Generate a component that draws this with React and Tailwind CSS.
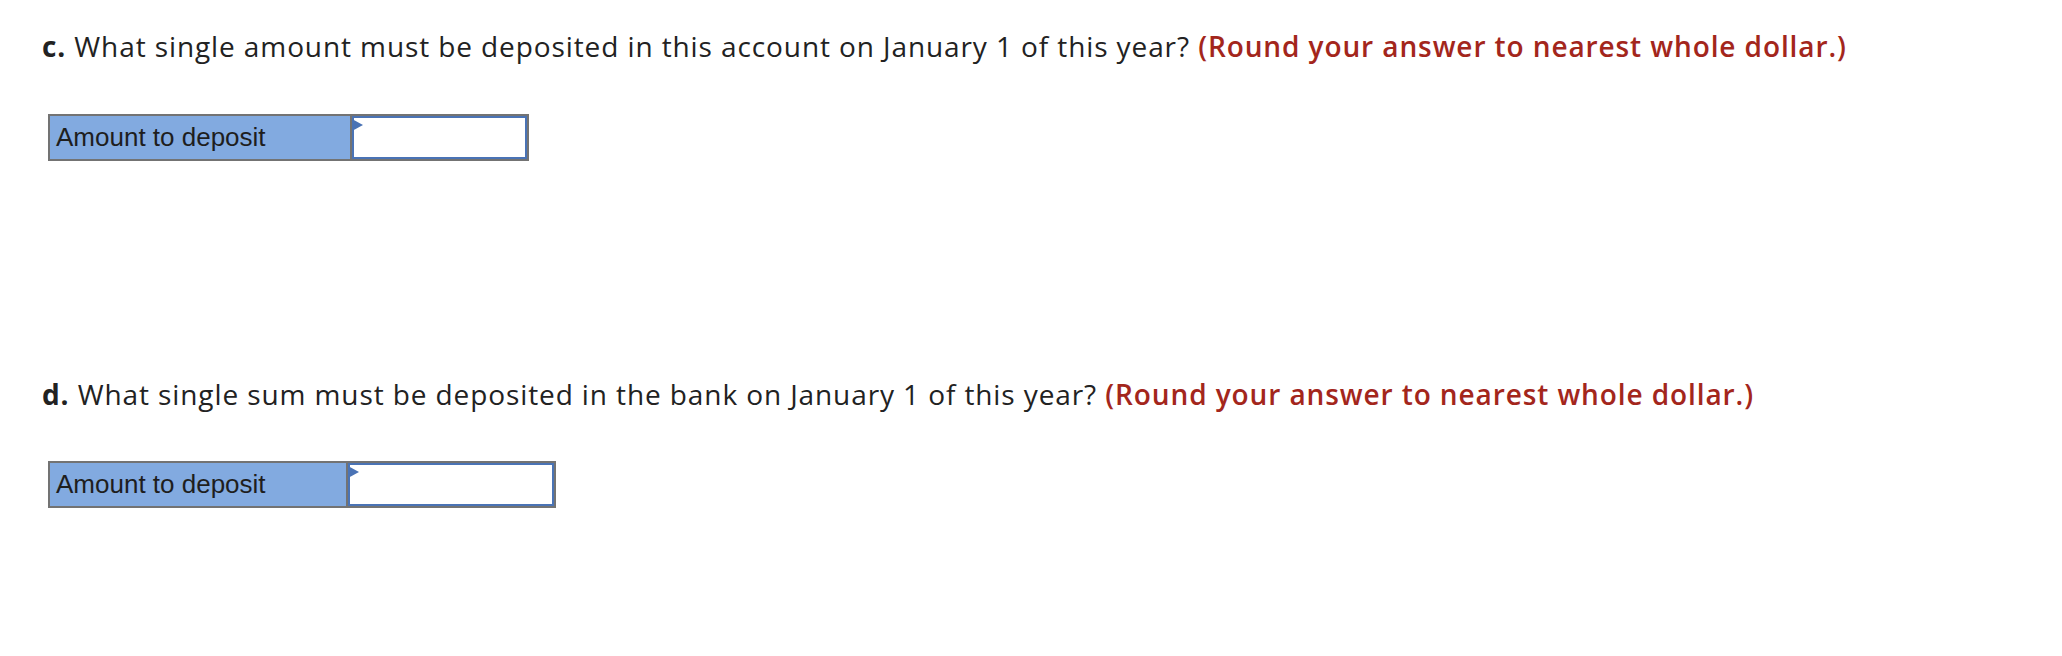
import React from 'react';

const AnswerRow = ({ labelWidth, inputWidth }) => (
  <div className="flex h-[47px] border-2 border-[#737373]" style={{ width: labelWidth + inputWidth }}>
    <div
      className="flex items-center pl-[6px] bg-[#82aae0] border-r-2 border-[#737373] text-[26px] text-[#1e1e1e] shrink-0"
      style={{ width: labelWidth - 2, fontFamily: '"Liberation Sans", Arial, sans-serif' }}
    >
      Amount to deposit
    </div>
    <div className="relative flex-1 bg-white border-2 border-[#4a73b5]">
      <span className="absolute top-[1px] left-[-2px] w-0 h-0 border-t-[6px] border-b-[6px] border-l-[11px] border-t-transparent border-b-transparent border-l-[#4a73b5]"></span>
    </div>
  </div>
);

function App() {
  return (
    <div
      className="w-[2062px] h-[656px] bg-white pt-[29px] pl-[42px] text-[#222222]"
      style={{ fontFamily: '"Open Sans", Lato, sans-serif' }}
    >
      <p className="text-[28px] leading-[34px] tracking-[0.9px] whitespace-nowrap">
        <b>c.</b> What single amount must be deposited in this account on January 1 of this year?{' '}
        <b className="font-semibold text-[#a3261c]">(Round your answer to nearest whole dollar.)</b>
      </p>
      <div className="mt-[51px] ml-[6px]">
        <AnswerRow labelWidth={304} inputWidth={177} />
      </div>

      <p className="mt-[216px] text-[28px] leading-[34px] tracking-[0.9px] whitespace-nowrap">
        <b>d.</b> What single sum must be deposited in the bank on January 1 of this year?{' '}
        <b className="font-semibold text-[#a3261c]">(Round your answer to nearest whole dollar.)</b>
      </p>
      <div className="mt-[50px] ml-[6px]">
        <AnswerRow labelWidth={300} inputWidth={208} />
      </div>
    </div>
  );
}

export default App;
